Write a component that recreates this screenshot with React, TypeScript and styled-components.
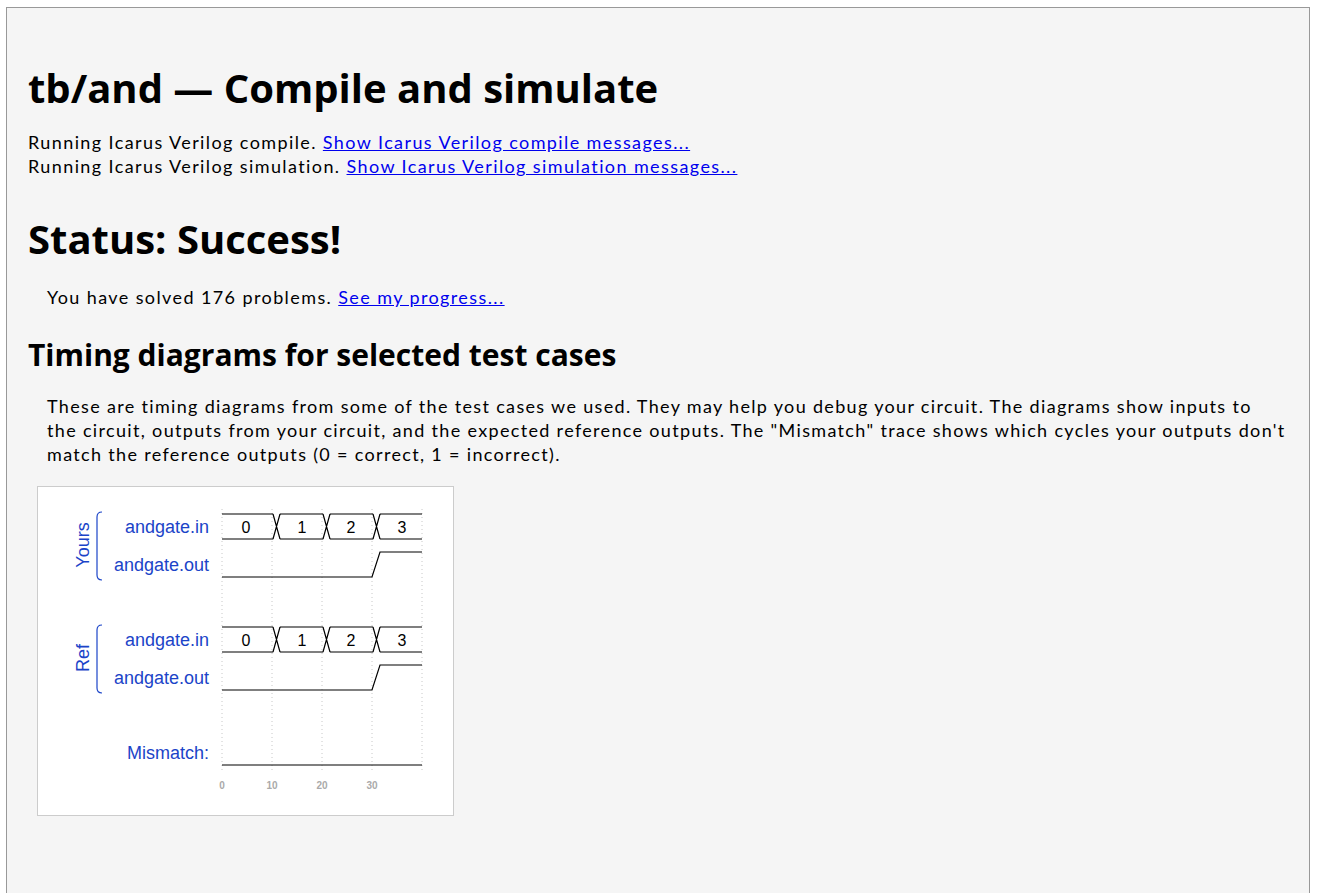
import React from 'react';
import styled, { createGlobalStyle } from 'styled-components';

const GlobalStyle = createGlobalStyle`
    html, body {
        margin: 0;
        padding: 0;
        background: #ffffff;
    }
    body {
        padding: 7px 8px 0 6px;
        font-family: Lato, 'Open Sans', sans-serif;
        color: #000;
    }
`;

const Page = styled.div`
    background: #f5f5f5;
    border: 1px solid #999;
    border-bottom: none;
    padding: 0 20px 80px 21px;
    min-height: 880px;
    box-sizing: border-box;
`;

const Title = styled.h1<{ top?: number }>`
    font-family: 'Open Sans', sans-serif;
    font-weight: 700;
    font-size: 40px;
    line-height: 54px;
    margin: ${(p) => p.top ?? 0}px 0 0 0;
`;

const SubTitle = styled.h2`
    font-family: 'Open Sans', sans-serif;
    font-weight: 700;
    font-size: 30px;
    line-height: 38px;
    margin: 27px 0 0 0;
`;

const Text = styled.p<{ top?: number; indent?: number }>`
    font-size: 18px;
    line-height: 24px;
    letter-spacing: 1.4px;
    margin: ${(p) => p.top ?? 0}px 0 0 ${(p) => p.indent ?? 0}px;
`;

const Lines = styled(Text)`
    white-space: nowrap;
    letter-spacing: 1.33px;
`;

const Link = styled.a`
    color: #0000ee;
    text-decoration: underline;
`;

const Figure = styled.div`
    margin: 20px 0 0 9px;
    width: 417px;
    height: 330px;
    background: #fff;
    border: 1px solid #ccc;
    box-sizing: border-box;
`;

const gridX = [184, 234, 284, 334, 384];
const BLUE = '#1b44c8';

function Bus({ y }: { y: number }) {
    const top = y;
    const bot = y + 25;
    const mid = y + 12.5;
    const segs = [
        { a: 184, b: 235, v: '0', c: 208 },
        { a: 242, b: 285, v: '1', c: 264 },
        { a: 292, b: 335, v: '2', c: 313 },
        { a: 342, b: 384, v: '3', c: 364 },
    ];
    let d = '';
    segs.forEach((s, i) => {
        d += `M${s.a},${top} L${s.b},${top} M${s.a},${bot} L${s.b},${bot} `;
        if (i < segs.length - 1) {
            const n = segs[i + 1].a;
            d += `M${s.b},${top} L${n},${bot} M${s.b},${bot} L${n},${top} `;
        }
    });
    return (
        <g>
            <path d={d} stroke="#000" strokeWidth={1.2} fill="none" />
            {segs.map((s) => (
                <text key={s.v} x={s.c} y={mid + 6} textAnchor="middle" fontSize={16} fill="#000">
                    {s.v}
                </text>
            ))}
        </g>
    );
}

function Wire({ y }: { y: number }) {
    const low = y + 25;
    return (
        <path
            d={`M184,${low} L334,${low} L342,${y} L384,${y}`}
            stroke="#000"
            strokeWidth={1.2}
            fill="none"
        />
    );
}

function Brace({ x, y1, y2 }: { x: number; y1: number; y2: number }) {
    return (
        <path
            d={`M${x + 5},${y1} Q${x},${y1} ${x},${y1 + 5} L${x},${y2 - 5} Q${x},${y2} ${x + 5},${y2}`}
            stroke={BLUE}
            strokeWidth={1.2}
            fill="none"
        />
    );
}

function Label({ y, children }: { y: number; children: React.ReactNode }) {
    return (
        <text x={171} y={y} textAnchor="end" fontSize={18} fill={BLUE}>
            {children}
        </text>
    );
}

function TimingDiagram() {
    return (
        <svg width="415" height="328" fontFamily="'Liberation Sans', Arial, sans-serif">
            {gridX.map((x) => (
                <line key={x} x1={x} y1={22} x2={x} y2={283} stroke="#c8c8c8" strokeDasharray="1,3" />
            ))}

            <text x={0} y={0} fontSize={18} fill={BLUE} textAnchor="middle" transform="translate(51,58) rotate(-90)">
                Yours
            </text>
            <Brace x={59} y1={25} y2={93} />
            <Label y={46}>andgate.in</Label>
            <Label y={84}>andgate.out</Label>
            <Bus y={27} />
            <Wire y={65} />

            <text x={0} y={0} fontSize={18} fill={BLUE} textAnchor="middle" transform="translate(51,171) rotate(-90)">
                Ref
            </text>
            <Brace x={59} y1={138} y2={206} />
            <Label y={159}>andgate.in</Label>
            <Label y={197}>andgate.out</Label>
            <Bus y={140} />
            <Wire y={178} />

            <Label y={272}>Mismatch:</Label>
            <path d="M184,278 L384,278" stroke="#000" strokeWidth={1.2} />

            {[0, 10, 20, 30].map((t, i) => (
                <text key={t} x={gridX[i]} y={302} textAnchor="middle" fontSize={10} fontWeight={700} fill="#aaa">
                    {t}
                </text>
            ))}
        </svg>
    );
}

export default function App() {
    return (
        <>
            <GlobalStyle />
            <Page>
                <Title top={53}>tb/and — Compile and simulate</Title>
                <Text top={15}>
                    Running Icarus Verilog compile. <Link href="#">Show Icarus Verilog compile messages...</Link>
                    <br />
                    Running Icarus Verilog simulation. <Link href="#">Show Icarus Verilog simulation messages...</Link>
                </Text>
                <Title top={34}>Status: Success!</Title>
                <Text top={19} indent={19}>
                    You have solved 176 problems. <Link href="#">See my progress...</Link>
                </Text>
                <SubTitle>Timing diagrams for selected test cases</SubTitle>
                <Lines top={20} indent={19}>
                    These are timing diagrams from some of the test cases we used. They may help you debug your circuit. The
                    diagrams show inputs to
                    <br />
                    the circuit, outputs from your circuit, and the expected reference outputs. The "Mismatch" trace shows
                    which cycles your outputs don't
                    <br />
                    match the reference outputs (0 = correct, 1 = incorrect).
                </Lines>
                <Figure>
                    <TimingDiagram />
                </Figure>
            </Page>
        </>
    );
}
